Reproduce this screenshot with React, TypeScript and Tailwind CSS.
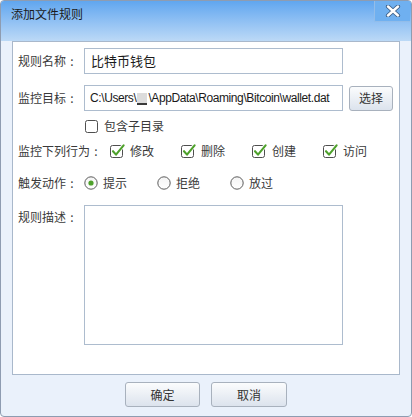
import React from 'react';

const font = "font-['Noto_Sans_CJK_SC','Noto_Sans',sans-serif]";

const Check: React.FC<{ checked?: boolean }> = ({ checked }) => (
  <svg width="16" height="15" viewBox="0 0 16 15" className="shrink-0">
    <rect x="0.5" y="1.5" width="12" height="12" rx="2" fill="#fff" stroke="#4f4f4f" />
    {checked && (
      <>
        <path d="M3 7.2 L6 10.6 L13.6 1.4" fill="none" stroke="#fff" strokeWidth="3.6" strokeLinecap="round" />
        <path d="M3 7.2 L6 10.6 L13.6 1.4" fill="none" stroke="#4ea12b" strokeWidth="2.1" strokeLinecap="round" strokeLinejoin="round" />
      </>
    )}
  </svg>
);

const Radio: React.FC<{ on?: boolean }> = ({ on }) => (
  <svg width="14" height="14" viewBox="0 0 14 14" className="shrink-0">
    <defs>
      <linearGradient id="rg" x1="0" y1="0" x2="0" y2="1">
        <stop offset="0" stopColor="#f4f4f4" />
        <stop offset="1" stopColor="#ffffff" />
      </linearGradient>
    </defs>
    <circle cx="7" cy="7" r="6.2" fill="url(#rg)" stroke="#5c5c5c" />
    {on && <circle cx="7" cy="7" r="2.6" fill="#4ea12b" />}
  </svg>
);

const Btn: React.FC<{ label: string; w: string }> = ({ label, w }) => (
  <div className={`${w} h-[25px] rounded-[3px] border border-[#a8b1bd] bg-gradient-to-b from-[#fbfcfd] to-[#dce3ed] flex items-center justify-center text-[12px] text-[#333]`}>
    {label}
  </div>
);

// label with a centred full-width colon, as the Windows dialog draws it
const Label: React.FC<{ text: string; w: string }> = ({ text, w }) => (
  <span className={`${w} shrink-0 flex items-center`}>
    {text}
    <span className="w-[12px] text-center">:</span>
  </span>
);

const App: React.FC = () => {
  return (
    <div className={`w-[412px] h-[417px] bg-[#eaf1fb] border border-[#8e9cb1] rounded-[4px] overflow-hidden flex flex-col ${font}`}>
      {/* title bar */}
      <div className="h-[40px] shrink-0 bg-gradient-to-b from-[#60a6ef] to-[#bcd9f6] flex justify-between items-start">
        <span className="pl-[10px] pt-[4px] text-[12px] leading-[18px] text-[#1b1b1b]">添加文件规则</span>
        <div className="w-[36px] h-[21px] mr-[1px] border-l border-b border-[#93bde9] bg-[#6fb0f0] rounded-bl-[2px] flex items-center justify-center">
          <svg width="16" height="12" viewBox="0 0 16 12">
            <path d="M3 1.5 L13 10.5 M13 1.5 L3 10.5" stroke="#3d5f86" strokeWidth="4.2" strokeLinecap="round" />
            <path d="M3 1.5 L13 10.5 M13 1.5 L3 10.5" stroke="#ffffff" strokeWidth="2.4" strokeLinecap="round" />
          </svg>
        </div>
      </div>

      {/* panel */}
      <div className="mx-[11px] h-[334px] shrink-0 bg-white border border-[#a9b8cb] pl-[5px] pt-[6px] text-[12px] text-[#3a3a3a]">
        <div className="flex items-center h-[26px]">
          <Label text="规则名称" w="w-[66px]" />
          <div className="w-[259px] h-[26px] border border-[#adbcce] flex items-center pl-[6px] text-[13px] text-[#1a1a1a]">比特币钱包</div>
        </div>

        <div className="flex items-center h-[26px] mt-[11px]">
          <Label text="监控目标" w="w-[66px]" />
          <div className="w-[259px] h-[26px] border border-[#adbcce] flex items-center pl-[5px] text-[12px] text-[#1a1a1a] whitespace-nowrap overflow-hidden font-['Liberation_Sans',sans-serif] tracking-[-0.4px]">
            <span>C:\Users\</span>
            <span className="shrink-0 w-[10px] h-[12px] mt-[1px] bg-[#dcdcdc] border-b-2 border-[#3a3a3a] mx-[1px]" />
            <span>\AppData\Roaming\Bitcoin\wallet.dat</span>
          </div>
          <div className="ml-[6px]">
            <Btn label="选择" w="w-[44px]" />
          </div>
        </div>

        <div className="flex items-center h-[20px] mt-[5px] pl-[67px] gap-[3px]">
          <Check />
          <span>包含子目录</span>
        </div>

        <div className="flex items-center h-[20px] mt-[5px]">
          <Label text="监控下列行为" w="w-[92px]" />
          {['修改', '删除', '创建', '访问'].map(t => (
            <div key={t} className="w-[71px] flex items-center gap-[4px]">
              <Check checked />
              <span>{t}</span>
            </div>
          ))}
        </div>

        <div className="flex items-center h-[20px] mt-[12px]">
          <Label text="触发动作" w="w-[66px]" />
          {[['提示', true], ['拒绝', false], ['放过', false]].map(([t, on]) => (
            <div key={t as string} className="w-[73px] flex items-center gap-[5px]">
              <Radio on={on as boolean} />
              <span>{t as string}</span>
            </div>
          ))}
        </div>

        <div className="flex items-start mt-[12px]">
          <div className="pt-[4px] leading-[16px]">
            <Label text="规则描述" w="w-[66px]" />
          </div>
          <div className="w-[259px] h-[140px] border border-[#adbcce]" />
        </div>
      </div>

      {/* buttons */}
      <div className="flex justify-center gap-[11px] mt-[7px]">
        <Btn label="确定" w="w-[75px]" />
        <Btn label="取消" w="w-[76px]" />
      </div>
    </div>
  );
};

export default App;
